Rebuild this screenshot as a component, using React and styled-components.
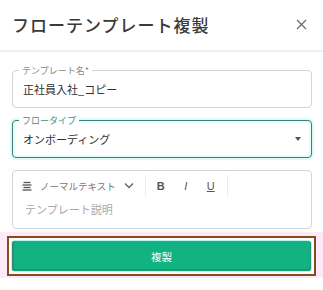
import React from 'react';
import styled, { createGlobalStyle } from 'styled-components';

const GlobalStyle = createGlobalStyle`
	html, body {
		margin: 0;
		padding: 0;
		background: #ffffff;
	}
	body {
		font-family: 'Noto Sans CJK JP', 'Noto Sans', sans-serif;
		color: #333333;
	}
	* {
		box-sizing: border-box;
	}
`;

const Dialog = styled.div`
	width: 323px;
	height: 290px;
	background: #ffffff;
	display: flex;
	flex-direction: column;
`;

const Header = styled.div`
	height: 52px;
	padding: 0 14px 2px 12px;
	display: flex;
	align-items: center;
	justify-content: space-between;
	border-bottom: 2px solid #eeeeee;
`;

const Title = styled.h2`
	margin: 0;
	font-size: 17px;
	font-weight: 500;
	color: #3a3a3a;
	letter-spacing: 1px;
`;

const CloseButton = styled.button`
	border: 0;
	background: none;
	padding: 0;
	width: 16px;
	height: 16px;
	display: flex;
	align-items: center;
	justify-content: center;
	color: #6b6b6b;
	cursor: pointer;
`;

const Body = styled.div`
	padding: 18px 11px 0 12px;
	display: flex;
	flex-direction: column;
	gap: 12px;
`;

const Field = styled.div`
	position: relative;
	height: 38px;
	padding: 0 9px 0 10px;
	border: 1px solid ${(p) => (p.focused ? '#3f7f70' : '#d4d4d4')};
	border-radius: 4px;
	display: flex;
	align-items: center;
	background: #ffffff;
	box-shadow: ${(p) =>
		p.focused ? '0 0 0 2px #dcfaf7, inset 0 0 0 2px #e8fcfa' : 'none'};
`;

const FieldLabel = styled.span`
	position: absolute;
	top: -6px;
	left: 6px;
	padding: 0 3px;
	background: #ffffff;
	font-size: 9px;
	line-height: 11px;
	color: ${(p) => (p.focused ? '#3f8f7c' : '#8a8a8a')};
`;

const Value = styled.span`
	flex: 1;
	font-size: 11px;
	color: #2f2f2f;
`;

const Caret = styled.span`
	width: 0;
	height: 0;
	margin-right: 1px;
	border-left: 3.5px solid transparent;
	border-right: 3.5px solid transparent;
	border-top: 4px solid #555555;
`;

const Editor = styled.div`
	height: 59px;
	border: 1px solid #d4d4d4;
	border-radius: 4px;
	display: flex;
	flex-direction: column;
`;

const Toolbar = styled.div`
	display: flex;
	align-items: center;
	height: 28px;
	padding: 1px 0 0 9px;
`;

const ToolGroup = styled.div`
	display: flex;
	align-items: center;
	gap: ${(p) => p.gap || 0}px;
	height: 22px;
	padding: 0 ${(p) => p.padRight || 0}px 0 ${(p) => p.padLeft || 0}px;
	border-right: 1px solid #eeeeee;
`;

const StyleLabel = styled.span`
	font-size: 9.5px;
	color: #777777;
	margin: 0 8px 0 8px;
`;

const FormatButton = styled.span`
	width: 14px;
	text-align: center;
	font-family: 'Liberation Sans', Arial, sans-serif;
	font-size: 11px;
	color: #555555;
	font-weight: ${(p) => (p.bold ? 700 : 400)};
	font-style: ${(p) => (p.italic ? 'italic' : 'normal')};
	text-decoration: ${(p) => (p.underline ? 'underline' : 'none')};
`;

const Placeholder = styled.div`
	padding: 2px 0 0 12px;
	font-size: 11px;
	color: #a8a8a8;
`;

const ActionArea = styled.div`
	margin: -9px -11px 0 -12px;
	padding: 4px 7px 2px;
	background: #fdeaf8;
`;

const ActionFrame = styled.div`
	border: 2px solid #8a4a1c;
	padding: 3px;
	background: #ffffff;
`;

const PrimaryButton = styled.button`
	display: block;
	width: 100%;
	height: 30px;
	border: 0;
	border-radius: 3px;
	background: #12b281;
	color: #ffffff;
	font-family: 'Noto Sans CJK JP', sans-serif;
	font-size: 10.5px;
	box-shadow: 0 0 0 1px #b9f4f0, inset -1px -2px 0 #1a9a74, inset 2px 0 0 #3a8a72;
	cursor: pointer;
`;

const LinesIcon = () => (
	<svg width='10' height='10' viewBox='0 0 10 10'>
		<g stroke='#555' strokeWidth='1.3'>
			<line x1='1.5' y1='1.5' x2='8.5' y2='1.5' />
			<line x1='0.5' y1='4' x2='9.5' y2='4' />
			<line x1='1.5' y1='6.5' x2='8.5' y2='6.5' />
			<line x1='0.5' y1='9' x2='9.5' y2='9' />
		</g>
	</svg>
);

const Chevron = () => (
	<svg width='10' height='7' viewBox='0 0 10 7'>
		<polyline points='1,1.5 5,5.5 9,1.5' fill='none' stroke='#666' strokeWidth='1.4' />
	</svg>
);

const CloseIcon = () => (
	<svg width='11' height='11' viewBox='0 0 11 11'>
		<g stroke='currentColor' strokeWidth='1.2'>
			<line x1='1' y1='1' x2='10' y2='10' />
			<line x1='10' y1='1' x2='1' y2='10' />
		</g>
	</svg>
);

const App = () => {
	return (
		<>
			<GlobalStyle />
			<Dialog>
				<Header>
					<Title>フローテンプレート複製</Title>
					<CloseButton aria-label='close'>
						<CloseIcon />
					</CloseButton>
				</Header>
				<Body>
					<Field>
						<FieldLabel>テンプレート名*</FieldLabel>
						<Value>正社員入社_コピー</Value>
					</Field>
					<Field focused>
						<FieldLabel focused>フロータイプ</FieldLabel>
						<Value>オンボーディング</Value>
						<Caret />
					</Field>
					<Editor>
						<Toolbar>
							<ToolGroup padRight={11}>
								<LinesIcon />
								<StyleLabel>ノーマルテキスト</StyleLabel>
								<Chevron />
							</ToolGroup>
							<ToolGroup gap={11} padLeft={8} padRight={9}>
								<FormatButton bold>B</FormatButton>
								<FormatButton italic>I</FormatButton>
								<FormatButton underline>U</FormatButton>
							</ToolGroup>
						</Toolbar>
						<Placeholder>テンプレート説明</Placeholder>
					</Editor>
					<ActionArea>
						<ActionFrame>
							<PrimaryButton>複製</PrimaryButton>
						</ActionFrame>
					</ActionArea>
				</Body>
			</Dialog>
		</>
	);
};

export default App;
